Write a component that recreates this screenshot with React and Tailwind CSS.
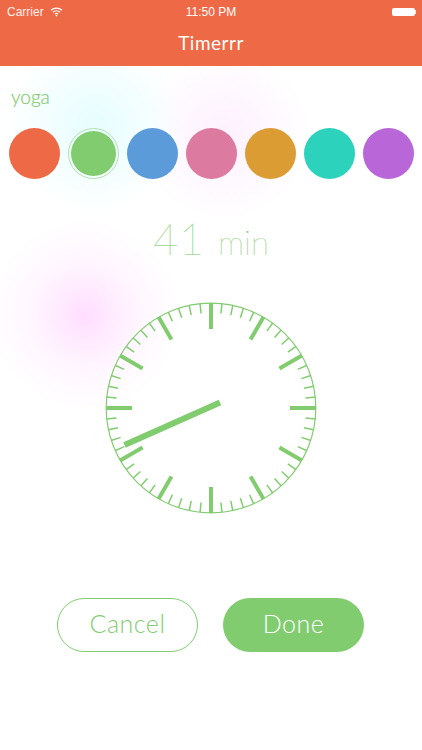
const COLORS = ['bg-[#ee6946]', 'bg-[#82cc70]', 'bg-[#5c9bd9]', 'bg-[#dc7a9f]', 'bg-[#dc9c34]', 'bg-[#2dd2bc]', 'bg-[#b866d8]'];

function Clock() {
  const ticks = [];
  for (let i = 0; i < 60; i++) {
    const major = i % 5 === 0;
    ticks.push(
      <line
        key={i}
        x1="106"
        y1="1"
        x2="106"
        y2={major ? 27 : 11}
        stroke="#82cc70"
        strokeWidth={major ? 4 : 1.5}
        transform={`rotate(${i * 6} 106 106)`}
      />
    );
  }
  return (
    <svg width="212" height="212" viewBox="0 0 212 212">
      <circle cx="106" cy="106" r="104.8" fill="none" stroke="#82cc70" strokeWidth="1.2" />
      {ticks}
      <line x1="115" y1="100.5" x2="19.5" y2="143" stroke="#82cc70" strokeWidth="6" />
    </svg>
  );
}

function Wifi() {
  return (
    <svg width="13" height="10" viewBox="0 0 14 11" fill="none" stroke="#fff" strokeWidth="1.3">
      <path d="M1 3.6C4.4.4 9.6.4 13 3.6" />
      <path d="M3.1 5.8c2.2-2 5.6-2 7.8 0" />
      <path d="M5.2 7.9c1-.9 2.6-.9 3.6 0" />
      <path d="M7 10.6 5.9 9.3c.6-.5 1.6-.5 2.2 0Z" fill="#fff" stroke="none" />
    </svg>
  );
}

export default function App() {
  return (
    <div className="w-[422px] h-[750px] overflow-hidden flex flex-col items-stretch font-['Lato',sans-serif] bg-white bg-[radial-gradient(circle_at_85px_315px,#ffddff_0px,#ffecff_30px,#fff8ff_60px,#ffffff00_95px),radial-gradient(circle_at_95px_125px,#e6fdff_0px,#f1feff_40px,#ffffff00_88px),radial-gradient(circle_at_225px_135px,#fdf0ff_0px,#fef7ff_40px,#ffffff00_85px)]">
      {/* Header */}
      <div className="h-[66px] bg-[#ee6946] text-white flex flex-col shrink-0">
        <div className="h-[22px] relative flex items-center justify-between pl-[7px] pr-[6px] pt-[1px] text-[12px] font-['Liberation_Sans',sans-serif]">
          <div className="flex items-center gap-[6px]">
            <span className="opacity-90">Carrier</span>
            <Wifi />
          </div>
          <span className="absolute left-0 right-0 text-center">11:50 PM</span>
          <div className="flex items-center">
            <div className="w-[23px] h-[8px] bg-white rounded-[2px]" />
            <div className="w-[1px] h-[4px] bg-white/80" />
          </div>
        </div>
        <div className="flex-1 flex items-center justify-center text-[19px] tracking-[0.5px] pb-[2px]">Timerrr</div>
      </div>

      {/* Name */}
      <div className="pl-[11px] pt-[20px] h-[62px] text-[#82cc70] text-[19px] font-light leading-[22px] [-webkit-text-stroke:0.2px_#82cc70]">yoga</div>

      {/* Colors */}
      <div className="flex justify-center gap-2">
        {COLORS.map((c, i) =>
          i === 1 ? (
            <div key={c} className="w-[51px] h-[51px] rounded-full border border-[#b5e0aa] flex items-center justify-center">
              <div className={`w-[45px] h-[45px] rounded-full ${c}`} />
            </div>
          ) : (
            <div key={c} className={`w-[51px] h-[51px] rounded-full ${c}`} />
          )
        )}
      </div>

      {/* Minutes */}
      <div className="mt-[35px] h-[50px] flex items-baseline justify-center gap-[13px] text-[#82cc70] font-thin leading-[50px] [-webkit-text-stroke:0.2px_#9fd793]">
        <span className="text-[43px] tracking-[1px]">41</span>
        <span className="text-[33px]">min</span>
      </div>

      {/* Clock */}
      <div className="mt-[38px] flex justify-center">
        <Clock />
      </div>

      {/* Buttons */}
      <div className="mt-[84px] pr-px flex justify-center gap-[25px] text-[25px] font-light tracking-[0.5px]">
        <button className="w-[141px] h-[54px] rounded-full border border-[#82cc70] text-[#82cc70] bg-white pb-[2px]">Cancel</button>
        <button className="w-[141px] h-[54px] rounded-full bg-[#82cc70] text-white pb-[2px]">Done</button>
      </div>
    </div>
  );
}
